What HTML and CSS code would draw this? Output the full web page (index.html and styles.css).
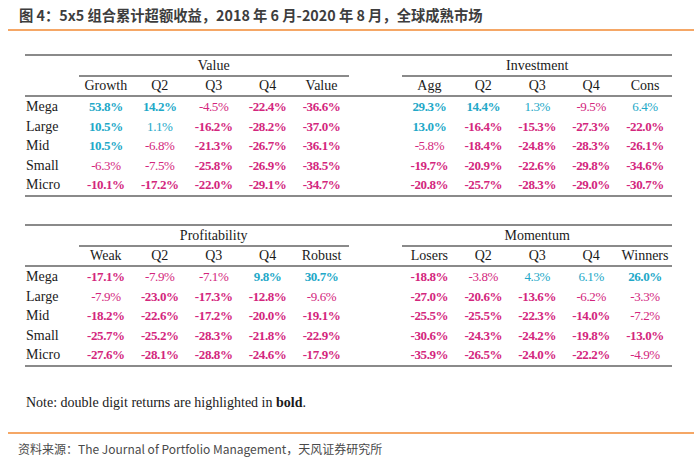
FILE: index.html
```html
<!DOCTYPE html>
<html lang="zh">
<head>
<meta charset="utf-8">
<title>5x5 组合累计超额收益</title>
<link rel="stylesheet" href="styles.css">
</head>
<body>
<div class="title">图 4：5x5 组合累计超额收益，2018 年 6 月-2020 年 8 月，全球成熟市场</div>

<div class="panel first">
  <div class="row grow">
    <div class="grp g1">Value</div>
    <div class="grp g2">Investment</div>
  </div>
  <div class="row hrow">
    <div></div>
    <div>Growth</div><div>Q2</div><div>Q3</div><div>Q4</div><div>Value</div>
    <div></div>
    <div>Agg</div><div>Q2</div><div>Q3</div><div>Q4</div><div>Cons</div>
  </div>
  <div class="row drow">
    <div class="lbl">Mega</div>
    <div class="t b">53.8%</div><div class="t b">14.2%</div><div class="m">-4.5%</div><div class="m b">-22.4%</div><div class="m b">-36.6%</div>
    <div></div>
    <div class="t b">29.3%</div><div class="t b">14.4%</div><div class="t">1.3%</div><div class="m">-9.5%</div><div class="t">6.4%</div>
  </div>
  <div class="row drow">
    <div class="lbl">Large</div>
    <div class="t b">10.5%</div><div class="t">1.1%</div><div class="m b">-16.2%</div><div class="m b">-28.2%</div><div class="m b">-37.0%</div>
    <div></div>
    <div class="t b">13.0%</div><div class="m b">-16.4%</div><div class="m b">-15.3%</div><div class="m b">-27.3%</div><div class="m b">-22.0%</div>
  </div>
  <div class="row drow">
    <div class="lbl">Mid</div>
    <div class="t b">10.5%</div><div class="m">-6.8%</div><div class="m b">-21.3%</div><div class="m b">-26.7%</div><div class="m b">-36.1%</div>
    <div></div>
    <div class="m">-5.8%</div><div class="m b">-18.4%</div><div class="m b">-24.8%</div><div class="m b">-28.3%</div><div class="m b">-26.1%</div>
  </div>
  <div class="row drow">
    <div class="lbl">Small</div>
    <div class="m">-6.3%</div><div class="m">-7.5%</div><div class="m b">-25.8%</div><div class="m b">-26.9%</div><div class="m b">-38.5%</div>
    <div></div>
    <div class="m b">-19.7%</div><div class="m b">-20.9%</div><div class="m b">-22.6%</div><div class="m b">-29.8%</div><div class="m b">-34.6%</div>
  </div>
  <div class="row drow">
    <div class="lbl">Micro</div>
    <div class="m b">-10.1%</div><div class="m b">-17.2%</div><div class="m b">-22.0%</div><div class="m b">-29.1%</div><div class="m b">-34.7%</div>
    <div></div>
    <div class="m b">-20.8%</div><div class="m b">-25.7%</div><div class="m b">-28.3%</div><div class="m b">-29.0%</div><div class="m b">-30.7%</div>
  </div>
</div>

<div class="panel second">
  <div class="row grow">
    <div class="grp g1">Profitability</div>
    <div class="grp g2">Momentum</div>
  </div>
  <div class="row hrow">
    <div></div>
    <div>Weak</div><div>Q2</div><div>Q3</div><div>Q4</div><div>Robust</div>
    <div></div>
    <div>Losers</div><div>Q2</div><div>Q3</div><div>Q4</div><div>Winners</div>
  </div>
  <div class="row drow">
    <div class="lbl">Mega</div>
    <div class="m b">-17.1%</div><div class="m">-7.9%</div><div class="m">-7.1%</div><div class="t b">9.8%</div><div class="t b">30.7%</div>
    <div></div>
    <div class="m b">-18.8%</div><div class="m">-3.8%</div><div class="t">4.3%</div><div class="t">6.1%</div><div class="t b">26.0%</div>
  </div>
  <div class="row drow">
    <div class="lbl">Large</div>
    <div class="m">-7.9%</div><div class="m b">-23.0%</div><div class="m b">-17.3%</div><div class="m b">-12.8%</div><div class="m">-9.6%</div>
    <div></div>
    <div class="m b">-27.0%</div><div class="m b">-20.6%</div><div class="m b">-13.6%</div><div class="m">-6.2%</div><div class="m">-3.3%</div>
  </div>
  <div class="row drow">
    <div class="lbl">Mid</div>
    <div class="m b">-18.2%</div><div class="m b">-22.6%</div><div class="m b">-17.2%</div><div class="m b">-20.0%</div><div class="m b">-19.1%</div>
    <div></div>
    <div class="m b">-25.5%</div><div class="m b">-25.5%</div><div class="m b">-22.3%</div><div class="m b">-14.0%</div><div class="m">-7.2%</div>
  </div>
  <div class="row drow">
    <div class="lbl">Small</div>
    <div class="m b">-25.7%</div><div class="m b">-25.2%</div><div class="m b">-28.3%</div><div class="m b">-21.8%</div><div class="m b">-22.9%</div>
    <div></div>
    <div class="m b">-30.6%</div><div class="m b">-24.3%</div><div class="m b">-24.2%</div><div class="m b">-19.8%</div><div class="m b">-13.0%</div>
  </div>
  <div class="row drow">
    <div class="lbl">Micro</div>
    <div class="m b">-27.6%</div><div class="m b">-28.1%</div><div class="m b">-28.8%</div><div class="m b">-24.6%</div><div class="m b">-17.9%</div>
    <div></div>
    <div class="m b">-35.9%</div><div class="m b">-26.5%</div><div class="m b">-24.0%</div><div class="m b">-22.2%</div><div class="m">-4.9%</div>
  </div>
</div>

<p class="note">Note: double digit returns are highlighted in <b>bold</b>.</p>

<div class="source">资料来源：The Journal of Portfolio Management，天风证券研究所</div>
</body>
</html>
```
FILE: styles.css
```css
html, body {
  margin: 0;
  padding: 0;
  background: #ffffff;
}

body {
  width: 700px;
  height: 464px;
  overflow: hidden;
  font-family: "Liberation Serif", "Times New Roman", serif;
  color: #1a1a1a;
}

.title {
  margin: 0 6px 0 8px;
  padding-left: 11px;
  height: 29px;
  line-height: 29px;
  border-bottom: 2px solid #f5a766;
  font-family: "Noto Sans CJK SC", "Noto Sans", sans-serif;
  font-weight: 700;
  font-size: 14.3px;
  color: #3d3d3d;
  white-space: nowrap;
}

.panel {
  width: 647px;
  margin-left: 25px;
  border-top: 2px solid #8a8a8a;
  border-bottom: 2px solid #8a8a8a;
}

.first { margin-top: 23px; }
.second { margin-top: 27px; }

.row {
  display: grid;
  grid-template-columns: repeat(12, 1fr);
  font-size: 14px;
}

.row > div {
  text-align: center;
  white-space: nowrap;
}

.grow {
  height: 21px;
}

.grp {
  line-height: 19px;
  height: 19px;
  border-bottom: 2px solid #8a8a8a;
}

.g1 { grid-column: 2 / 7; }
.g2 { grid-column: 8 / 13; }

.hrow {
  height: 18px;
  line-height: 18px;
  border-bottom: 2px solid #8a8a8a;
}

.drow {
  height: 19.6px;
  line-height: 19.6px;
}

.row > .lbl {
  text-align: left;
  padding-left: 1px;
}

.t, .m {
  font-size: 13px;
  letter-spacing: -0.4px;
}

.t { color: #22a8c8; }
.m { color: #d3267d; }
.b { font-weight: 700; }

.note {
  margin: 26px 0 0 26px;
  line-height: 20px;
  font-size: 14px;
  color: #1a1a1a;
}

.source {
  margin: 19px 6px 0 8px;
  padding: 5px 0 0 10px;
  border-top: 2px solid #f5a766;
  line-height: 20px;
  font-family: "Noto Sans CJK SC", "Noto Sans", sans-serif;
  font-size: 12px;
  color: #4a4a4a;
  white-space: nowrap;
}
```
